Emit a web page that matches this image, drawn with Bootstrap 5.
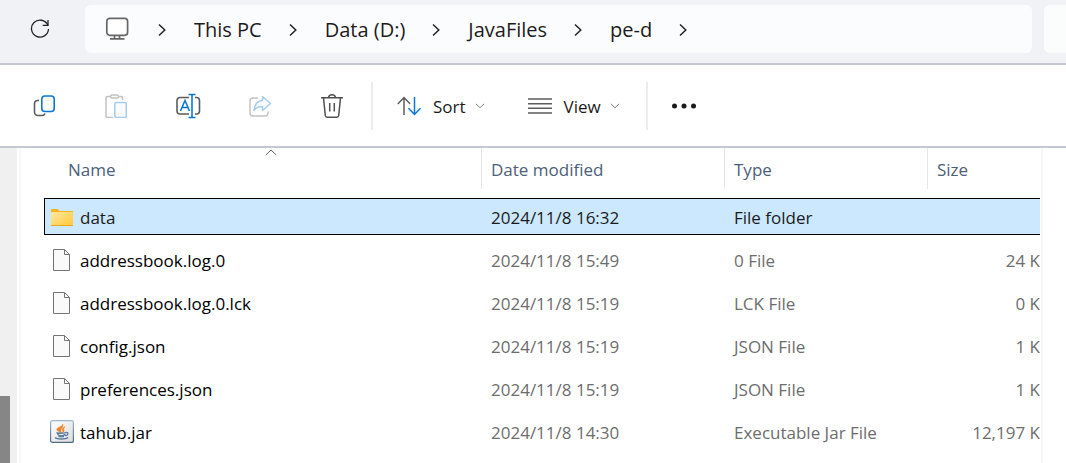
<!DOCTYPE html>
<html lang="en">
<head>
<meta charset="utf-8">
<meta name="viewport" content="width=device-width, initial-scale=1">
<title>pe-d - File Explorer</title>
<link href="https://cdn.jsdelivr.net/npm/bootstrap@5.3.0/dist/css/bootstrap.min.css" rel="stylesheet">
<style>
  body { font-family: "Segoe UI", "Open Sans", "Noto Sans", sans-serif; font-size: 17px; line-height: 24px; color: #1b1b1b; background: #fff; }
  svg { display: block; flex: none; }
  .address-row { background: #f1f2f6; border-bottom: 2px solid #c5c8d0; padding: 5px 0 10px; }
  .reload-btn { width: 32px; margin: 0 29px 0 24px; }
  .address-bar { background: #fbfcfe; border-radius: 6px; height: 48px; padding: 0 20px; }
  .address-bar ol { font-size: 20px; line-height: 28px; margin-left: 2px; }
  .address-bar a { color: #1b1b1b; padding-top: 2px; }
  .crumb-gap { margin: 2px 28px 0 27px; }
  .search-box { width: 22px; height: 48px; background: #fbfcfc; border: 0; border-radius: 6px 0 0 6px; margin-left: 12px; }
  .plain-btn { border: 0; background: none; color: inherit; padding: 0; display: flex; align-items: center; justify-content: center; }
  .command-bar { border-bottom: 2px solid #c5c8d0; height: 83px; padding-left: 8px; }
  .tool-btn { width: 72px; height: 48px; }
  .menu-btn { height: 48px; }
  .menu-btn span { margin: 2px 9px 0 12px; }
  .view-btn { margin: 0 26px 0 43px; }
  .bar-rule { width: 2px; height: 48px; background: #ececec; }
  .first-rule { margin-left: 3px; }
  .side-rail { width: 17px; flex: none; background: #f0f0f0; }
  .rail-thumb { width: 10px; height: 67px; background: #868686; }
  .list-pane { border: solid #f7f7f7; border-width: 0 2px; margin: 0 23px 0 2px; padding: 0 1px 0 23px; min-width: 0; }
  .file-table { border-collapse: separate; border-spacing: 0 6px; table-layout: fixed; width: 100%; margin-top: -6px; }
  .file-table th { padding: 0 0 3px; font-weight: 400; color: #4c607a; }
  .file-table th button { width: 100%; height: 41px; padding: 3px 0 0 9px; justify-content: flex-start; border-right: 1px solid #e5e5e5; }
  .file-table th:first-child { padding-left: 16px; }
  .file-table th:first-child button { padding-left: 8px; }
  .file-table th:last-child button { border-right: 0; }
  .file-table td { height: 37px; padding: 3px 0 0 9px; color: #6d6d6d; vertical-align: middle; white-space: nowrap; border: solid transparent; border-width: 1px 0; }
  .file-table td:first-child { color: #000; padding: 0 0 0 5px; border-left-width: 1px; }
  .file-table td span { padding-top: 3px; }
  .file-table .picked td { background: #cce8ff; border-color: #000; color: #1b1b1b; }
  .col-date { width: 243px; }
  .col-type { width: 203px; }
  .col-size { width: 112px; }
  .sort-mark { position: absolute; top: 1px; left: 50%; transform: translateX(-50%); }
</style>
</head>
<body class="d-flex flex-column min-vh-100 overflow-hidden">
<svg class="position-absolute" width="0" height="0" aria-hidden="true">
  <defs>
    <linearGradient id="folderFill" x1="0" y1="0" x2="1" y2="1"><stop offset="0" stop-color="#ffe7a2"/><stop offset="1" stop-color="#ffc937"/></linearGradient>
    <linearGradient id="jarFill" x1="0" y1="0" x2="1" y2="1"><stop offset="0" stop-color="#fff"/><stop offset="1" stop-color="#dcdcdc"/></linearGradient>
    <linearGradient id="jarEdge" x1="0" y1="0" x2="0" y2="1"><stop offset="0" stop-color="#9db9d0"/><stop offset="1" stop-color="#4d6b84"/></linearGradient>
  </defs>
  <symbol id="crumb" viewBox="0 0 8 14"><path d="M1 1.5 6.8 7 1 12.5" fill="none" stroke="#222" stroke-width="1.5"/></symbol>
  <symbol id="drop" viewBox="0 0 10 6"><path d="M1 .8 5 4.8 9 .8" fill="none" stroke="#777" stroke-width="1"/></symbol>
  <symbol id="sheet" viewBox="0 0 17 22"><path d="M.5.5H11.500L16.500 5.500V21.500H.5Z" fill="#fafafa" stroke="#747474"/><path d="M11.500 .5V5.500H16.500" fill="none" stroke="#747474"/></symbol>
</svg>

<header class="address-row d-flex align-items-center">
  <button class="plain-btn reload-btn" aria-label="Refresh">
    <svg width="20" height="20" viewBox="0 0 20 20" fill="none" stroke="#222" stroke-width="1.300"><path d="M17.800 6.200A8.500 8.500 0 1 0 18.500 10"/><path d="M18 1V6.300H12.700"/></svg>
  </button>
  <nav class="address-bar flex-grow-1 d-flex align-items-center" aria-label="Address">
    <svg width="24" height="24" viewBox="0 0 24 24" fill="#fff" stroke="#666" stroke-width="1.700"><rect x="1.800" y="1.300" width="20.800" height="17" rx="3"/><path d="M9.500 18.500V21.500M14.500 18.500V21.500M5 21.800H19.500"/></svg>
    <ol class="list-unstyled d-flex align-items-center mb-0">
      <li class="d-flex align-items-center"><svg class="crumb-gap" width="8" height="14"><use href="#crumb"/></svg><a class="text-decoration-none" href="#">This PC</a></li>
      <li class="d-flex align-items-center"><svg class="crumb-gap" width="8" height="14"><use href="#crumb"/></svg><a class="text-decoration-none" href="#">Data (D:)</a></li>
      <li class="d-flex align-items-center"><svg class="crumb-gap" width="8" height="14"><use href="#crumb"/></svg><a class="text-decoration-none" href="#">JavaFiles</a></li>
      <li class="d-flex align-items-center"><svg class="crumb-gap" width="8" height="14"><use href="#crumb"/></svg><a class="text-decoration-none" href="#">pe-d</a></li>
      <li class="d-flex align-items-center"><svg class="crumb-gap" width="8" height="14"><use href="#crumb"/></svg></li>
    </ol>
  </nav>
  <input class="search-box" type="search" aria-label="Search pe-d">
</header>

<div class="command-bar d-flex align-items-center" role="toolbar" aria-label="Commands">
  <button class="plain-btn tool-btn" aria-label="Copy"><svg width="24" height="24" viewBox="0 0 24 24" fill="none" stroke-width="1.600"><path d="M7 6.500H5.500a3 3 0 0 0-3 3V18a3.500 3.500 0 0 0 3.500 3.500H10a3 3 0 0 0 3-2" stroke="#5c5c5c"/><rect x="9.800" y="2" width="12.400" height="15.500" rx="3" fill="#fafafa" stroke="#0a78d4"/></svg></button>
  <button class="plain-btn tool-btn" aria-label="Paste" disabled><svg width="24" height="24" viewBox="0 0 24 24" fill="none" stroke="#c2c2c2" stroke-width="1.500"><path d="M6.500 2.500H3.500a1.500 1.500 0 0 0-1.500 1.500V22a1.500 1.500 0 0 0 1.500 1.500H9M14.500 2.500H17A1.500 1.500 0 0 1 18.500 4V6"/><rect x="6.500" y="1" width="8" height="3" rx="1.500" fill="#fff"/><rect x="10.800" y="8.500" width="11.500" height="15" rx="1.500" fill="#fafafa" stroke="#a3cdf0"/></svg></button>
  <button class="plain-btn tool-btn" aria-label="Rename"><svg width="26" height="26" viewBox="0 0 26 26" fill="none" stroke-width="1.600"><path d="M14 4.500H5a3 3 0 0 0-3 3V18a3 3 0 0 0 3 3h9M20 4.500h1.500a3 3 0 0 1 3 3V18a3 3 0 0 1-3 3H20" stroke="#5c5c5c"/><path d="M5.500 18 10 7.500 14.500 18M7 14.500H13M13.500 1.500H20.500M17 1.500V24.500M13.500 24.500H20.500" stroke="#0a78d4"/></svg></button>
  <button class="plain-btn tool-btn" aria-label="Share" disabled><svg width="24" height="24" viewBox="0 0 24 24" fill="none" stroke-width="1.400"><path d="M10 4H5a3 3 0 0 0-3 3V19a3 3 0 0 0 3 3H17a3 3 0 0 0 3-3V17.500" stroke="#c2c2c2"/><path d="M14.500 2.500 22.500 9.500 14.500 16.500V12.500C10.500 12.300 8 13.500 6 16.500 6.500 10.500 9.500 7 14.500 6.500Z" fill="#fafafa" stroke="#a3cdf0" stroke-linejoin="round"/></svg></button>
  <button class="plain-btn tool-btn" aria-label="Delete"><svg width="24" height="26" viewBox="0 0 24 26" fill="none" stroke="#505050" stroke-width="1.500"><path d="M1 4.700H23M8.500 4.500C9 .7 15 .7 15.500 4.500M3.500 5 5.300 22.500a2 2 0 0 0 2 1.800h9.400a2 2 0 0 0 2-1.800L20.500 5M9.700 10V18.500M14.300 10V18.500"/></svg></button>
  <div class="bar-rule first-rule"></div>
  <button class="plain-btn menu-btn ms-4"><svg width="24" height="20" viewBox="0 0 24 20" fill="none" stroke-width="1.500"><path d="M7 19V1.500M.8 8 7 1.500 13 7.700" stroke="#5c5c5c"/><path d="M17.500 1V18.500M11.500 12.300 17.500 18.500 23.500 12.300" stroke="#0a78d4"/></svg><span>Sort</span><svg width="10" height="6"><use href="#drop"/></svg></button>
  <button class="plain-btn menu-btn view-btn"><svg width="24" height="16" viewBox="0 0 24 16" stroke="#5c5c5c" stroke-width="1.500"><path d="M0 1H24M0 5.700H24M0 10.300H24M0 15H24"/></svg><span>View</span><svg width="10" height="6"><use href="#drop"/></svg></button>
  <div class="bar-rule"></div>
  <button class="plain-btn menu-btn ms-4" aria-label="See more"><svg width="24" height="6" viewBox="0 0 24 6" fill="#1b1b1b"><circle cx="2.500" cy="3" r="2.500"/><circle cx="12" cy="3" r="2.500"/><circle cx="21.500" cy="3" r="2.500"/></svg></button>
</div>

<main class="flex-grow-1 d-flex">
  <div class="side-rail d-flex align-items-end"><div class="rail-thumb"></div></div>
  <div class="list-pane flex-grow-1">
    <table class="file-table">
      <colgroup><col><col class="col-date"><col class="col-type"><col class="col-size"></colgroup>
      <thead>
        <tr>
          <th scope="col" aria-sort="ascending"><button class="plain-btn position-relative">Name<svg class="sort-mark" width="12" height="7" viewBox="0 0 12 7"><path d="M.8 6 6 1 11.200 6" fill="none" stroke="#666"/></svg></button></th>
          <th scope="col"><button class="plain-btn">Date modified</button></th>
          <th scope="col"><button class="plain-btn">Type</button></th>
          <th scope="col"><button class="plain-btn">Size</button></th>
        </tr>
      </thead>
      <tbody>
        <tr class="picked"><td><div class="d-flex align-items-center gap-1"><svg width="26" height="24" viewBox="0 0 26 24"><path d="M1 5a1 1 0 0 1 1-1H7.500L9.500 6H23V9H1Z" fill="#f5b31c"/><rect x="1" y="7" width="22" height="14" rx="1" fill="url(#folderFill)"/><path d="M1 20.500H23" stroke="#efa91f"/></svg><span>data</span></div></td><td>2024/11/8 16:32</td><td>File folder</td><td></td></tr>
        <tr><td><div class="d-flex align-items-center gap-1"><svg width="26" height="24" viewBox="0 0 26 24"><use href="#sheet" x="3" y="1" width="17" height="22"/></svg><span>addressbook.log.0</span></div></td><td>2024/11/8 15:49</td><td>0 File</td><td class="text-end">24 K</td></tr>
        <tr><td><div class="d-flex align-items-center gap-1"><svg width="26" height="24" viewBox="0 0 26 24"><use href="#sheet" x="3" y="1" width="17" height="22"/></svg><span>addressbook.log.0.lck</span></div></td><td>2024/11/8 15:19</td><td>LCK File</td><td class="text-end">0 K</td></tr>
        <tr><td><div class="d-flex align-items-center gap-1"><svg width="26" height="24" viewBox="0 0 26 24"><use href="#sheet" x="3" y="1" width="17" height="22"/></svg><span>config.json</span></div></td><td>2024/11/8 15:19</td><td>JSON File</td><td class="text-end">1 K</td></tr>
        <tr><td><div class="d-flex align-items-center gap-1"><svg width="26" height="24" viewBox="0 0 26 24"><use href="#sheet" x="3" y="1" width="17" height="22"/></svg><span>preferences.json</span></div></td><td>2024/11/8 15:19</td><td>JSON File</td><td class="text-end">1 K</td></tr>
        <tr><td><div class="d-flex align-items-center gap-1"><svg width="26" height="24" viewBox="0 0 26 24"><rect x=".6" y=".6" width="22.800" height="21.800" rx="2" fill="url(#jarFill)" stroke="url(#jarEdge)" stroke-width="1.200"/><path d="M12.500 4C14 7-1 8.500 12 13 8.500 9.500 14.500 8 12.500 4M15 6.500C11.500 8 12.500 10 13 12.500 15.500 10.500 12.500 9.500 15 6.500" fill="#ec8531" stroke="#ec8531" stroke-width=".5"/><path d="M6.500 12.500C8 13.500 14 13.500 16 12.500M7.500 13.500C8 16.500 14 16.500 15 14M16 12.500C19 12 18.500 15.500 15 15.500M8.500 16.500H14M5 17.500C7 19.500 16 19.500 18 17.500" fill="none" stroke="#56799a" stroke-width="1.300"/></svg><span>tahub.jar</span></div></td><td>2024/11/8 14:30</td><td>Executable Jar File</td><td class="text-end">12,197 K</td></tr>
      </tbody>
    </table>
  </div>
</main>
<script src="https://cdn.jsdelivr.net/npm/bootstrap@5.3.0/dist/js/bootstrap.bundle.min.js"></script>
</body>
</html>
